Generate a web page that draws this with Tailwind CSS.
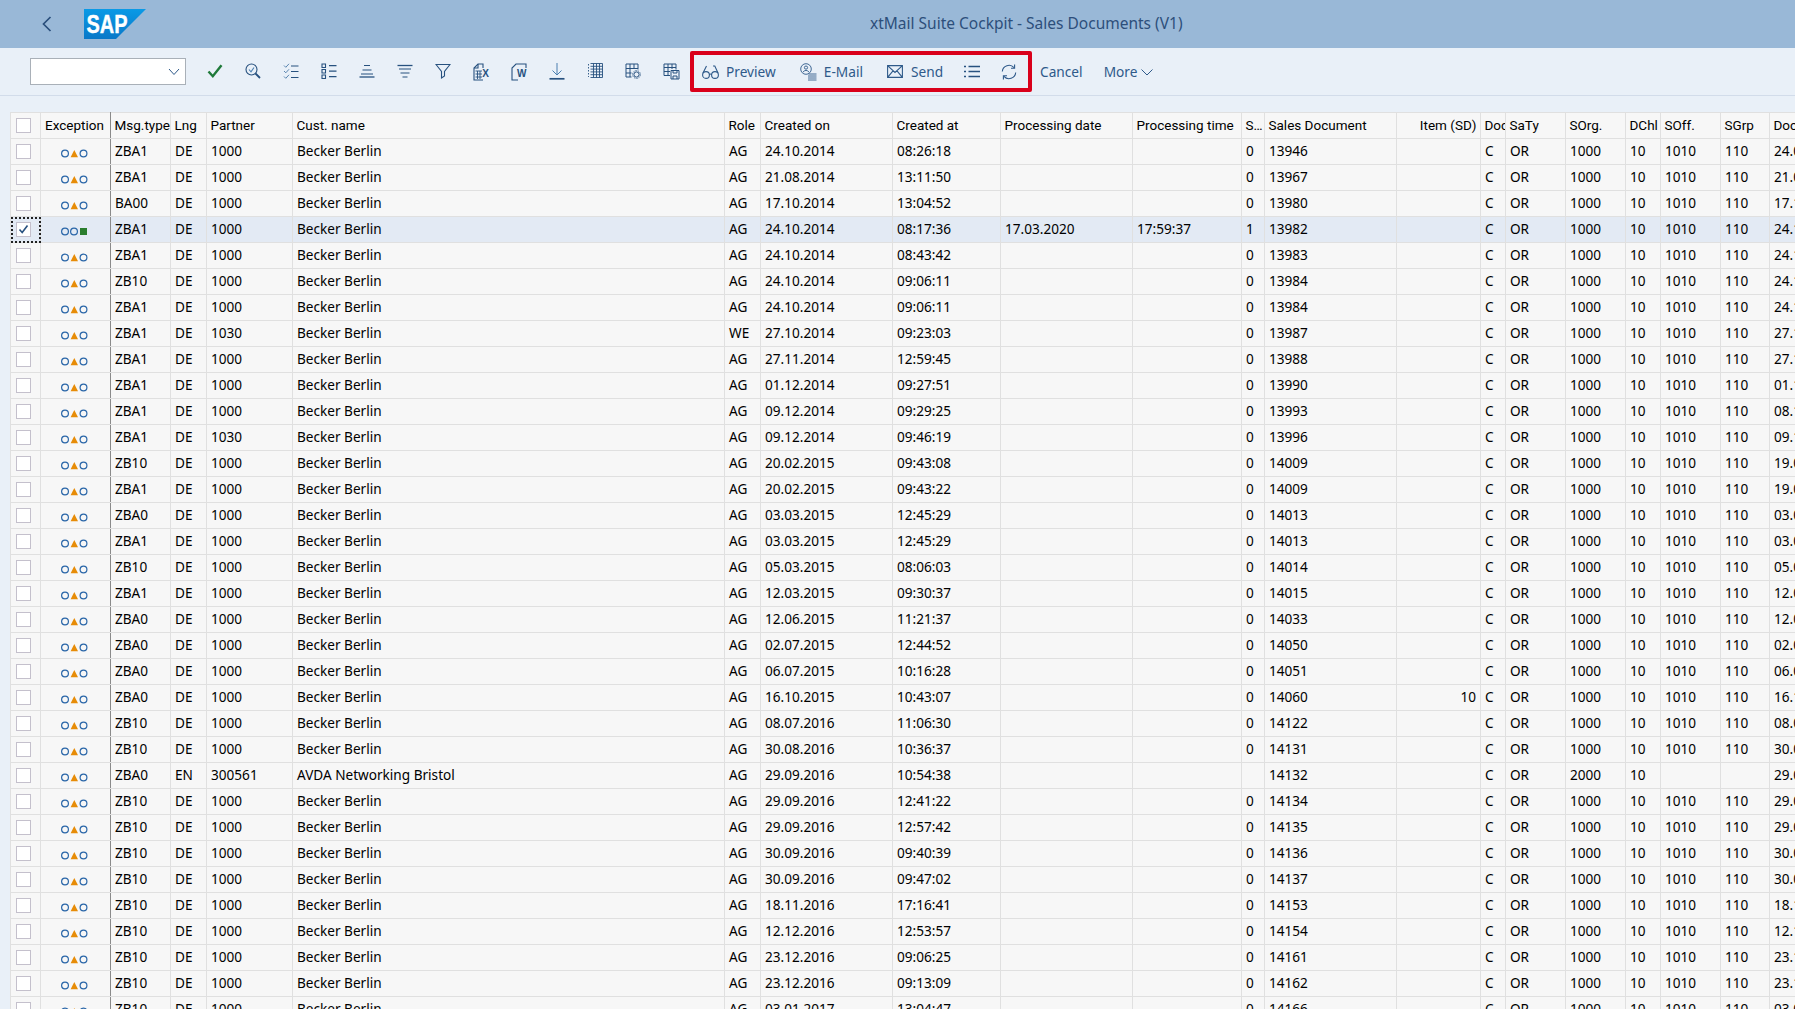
<!DOCTYPE html>
<html lang="en">
  <head>
    <meta charset="UTF-8" />
    <title>xtMail Suite Cockpit - Sales Documents (V1)</title>
    <script src="https://cdn.jsdelivr.net/npm/@tailwindcss/browser@4"></script>
  </head>
  <body class="h-screen overflow-hidden bg-[#e9f0f8] font-['Noto_Sans',sans-serif] text-[13.6px] text-black">
    <!-- shell header -->
    <header class="flex h-[48px] items-center bg-[#99b8d7]">
      <svg class="ml-[41px] h-[16px] w-[12px]" viewBox="0 0 12 16" fill="none" stroke="#2a4f7c" stroke-width="1.7"><path d="M9.5 1 L2.5 8 L9.5 15" /></svg>
      <svg class="ml-[31px] h-[30px] w-[62px]" viewBox="0 0 62 30">
        <defs>
          <linearGradient id="sapblue" x1="0" y1="0" x2="0" y2="1"><stop offset="0" stop-color="#0a9ae6" /><stop offset="1" stop-color="#0a78c8" /></linearGradient>
        </defs>
        <path d="M0 0 H62 L32 30 H0 Z" fill="url(#sapblue)" />
        <text x="2.5" y="24" font-family="Liberation Sans" font-weight="700" font-size="26" textLength="41" lengthAdjust="spacingAndGlyphs" fill="#fff" stroke="#fff" stroke-width=".4">SAP</text>
      </svg>
      <h1 class="ml-[724px] text-[15.5px] text-[#2d4f7b]">xtMail Suite Cockpit - Sales Documents (V1)</h1>
    </header>

    <!-- toolbar -->
    <div class="flex h-[48px] items-center border-b border-[#d2dcea] pl-[30px] text-[13.7px] text-[#2f5a8a]">
      <div class="flex h-[27px] w-[156px] items-center justify-end border border-[#a9b0b8] bg-white pr-[5px]">
        <svg class="h-[8px] w-[12px]" viewBox="0 0 12 8" fill="none" stroke="#2f5a8a" stroke-width="1"><path d="M1 1 L6 6.5 L11 1" /></svg>
      </div>
      <div class="ml-[10px] mt-[1px] flex text-[#27517f]">
        <span class="flex w-[38px] justify-center">
          <svg class="h-[16px] w-[16px]" viewBox="0 0 16 16" fill="none" stroke="#1f7a3a" stroke-width="2.4"><path d="M1.5 8.5 L5.8 13.2 L14.5 2.2" /></svg>
        </span>
        <span class="flex w-[38px] justify-center">
          <svg class="h-[16px] w-[16px]" viewBox="0 0 16 16" fill="none" stroke="currentColor" stroke-width="1.1"><circle cx="6.5" cy="6.5" r="5.5" /><path d="M4 6.5 L6 8.8 L9 4.5" stroke="#4a7fb0" /><path d="M10.5 10.5 L15 15" stroke-width="1.8" /></svg>
        </span>
        <span class="flex w-[38px] justify-center">
          <svg class="h-[16px] w-[16px]" viewBox="0 0 16 16" fill="none" stroke="currentColor" stroke-width="1"><path d="M1 2.5 L2.8 4.3 L6 .8 M1 8 L2.8 9.8 L6 6.3 M1 13.5 L2.8 15.3 L6 11.8" stroke="#5a85b0" /><path d="M8 3 H15.5 M8 8.5 H15.5 M8 14.5 H15.5" stroke-width="1.2" /></svg>
        </span>
        <span class="flex w-[38px] justify-center">
          <svg class="h-[16px] w-[16px]" viewBox="0 0 16 16" fill="none" stroke="currentColor" stroke-width="1.1"><path d="M1 1 H4.5 V4.5 H1 Z M1 6.5 H4.5 V10 H1 Z M1 12 H4.5 V15.5 H1 Z" /><path d="M8 2.7 H15.5 M8 8.2 H15.5 M8 13.7 H15.5" stroke-width="1.2" /></svg>
        </span>
        <span class="flex w-[38px] justify-center">
          <svg class="h-[16px] w-[16px]" viewBox="0 0 16 16" fill="none" stroke="currentColor" stroke-width="1.1"><path d="M5 2.5 H11 M3.5 7 H12.5 M2 11 H14" /><path d="M.5 14 H15.5" stroke-width="1.3" /></svg>
        </span>
        <span class="flex w-[38px] justify-center">
          <svg class="h-[16px] w-[16px]" viewBox="0 0 16 16" fill="none" stroke="currentColor" stroke-width="1.1"><path d="M.5 2.5 H15.5" stroke-width="1.3" /><path d="M2 6 H14 M3.5 10 H12.5 M5.5 14 H10.5" /></svg>
        </span>
        <span class="flex w-[38px] justify-center">
          <svg class="h-[16px] w-[16px]" viewBox="0 0 16 16" fill="none" stroke="currentColor" stroke-width="1.1"><path d="M1 1.5 H15 L9.5 8.5 V13 L6.5 15 V8.5 Z" /></svg>
        </span>
        <span class="flex w-[38px] justify-center">
          <svg class="h-[18px] w-[17px]" viewBox="0 0 17 18" fill="none" stroke="currentColor" stroke-width="1.1"><path d="M10 5 V1 H5 L1 5 V17 H10" /><path d="M5 1 V5 H1" /><path d="M2.5 8 H9 M2.5 11 H9 M2.5 14 H9 M4.5 8 V16 M7 8 V16" stroke-width=".9" /><text x="9.2" y="13.5" font-family="Liberation Sans" font-weight="700" font-size="10" fill="currentColor" stroke="none">X</text></svg>
        </span>
        <span class="flex w-[38px] justify-center">
          <svg class="h-[18px] w-[17px]" viewBox="0 0 17 18" fill="none" stroke="currentColor" stroke-width="1.1"><path d="M15 5 V1 H5 L1 5 V17 H7" /><text x="6" y="13.5" font-family="Liberation Sans" font-weight="700" font-size="10" fill="currentColor" stroke="none">W</text></svg>
        </span>
        <span class="flex w-[38px] justify-center">
          <svg class="h-[17px] w-[16px]" viewBox="0 0 16 17" fill="none" stroke="currentColor" stroke-width="1"><path d="M8 0 V11.5 M3.5 7.5 L8 12 L12.5 7.5" stroke="#4a7fb0" /><path d="M.5 15.8 H15.5" stroke-width="1.7" /></svg>
        </span>
        <span class="flex w-[38px] justify-center">
          <svg class="h-[15px] w-[15px]" viewBox="0 0 15 15" fill="none" stroke="currentColor" stroke-width=".9"><path d="M2.5 .5 H14.5 V14.5 H2.5" /><path d="M2.5 3.3 H14.5 M2.5 6.1 H14.5 M2.5 8.9 H14.5 M2.5 11.7 H14.5 M5.5 .5 V14.5 M8.5 .5 V14.5 M11.5 .5 V14.5" /><path d="M.5 1 V14" stroke-dasharray="1.5 1.5" /></svg>
        </span>
        <span class="flex w-[38px] justify-center">
          <svg class="h-[16px] w-[16px]" viewBox="0 0 16 16" fill="none" stroke="currentColor" stroke-width="1"><path d="M6.5 14 H1 V1 H13 V6.5 M1 5.5 H13 M1 10 H6.5 M5 1 V14 M9 1 V6" /><circle cx="11.5" cy="11.5" r="2.6" /><circle cx="11.5" cy="11.5" r="3.9" stroke-dasharray="1.2 1.2" /></svg>
        </span>
        <span class="flex w-[38px] justify-center">
          <svg class="h-[17px] w-[17px]" viewBox="0 0 17 17" fill="none" stroke="currentColor" stroke-width="1"><path d="M7 12.5 H1 V1 H13 V6.5 M1 4.5 H13 M1 8.5 H7 M5 1 V12.5 M9 1 V6" /><path d="M8 7.5 H16 V16 H8 Z M10 7.5 V10 H14 V7.5 M10 16 V13 H14 V16" /></svg>
        </span>
      </div>

      <!-- highlighted actions -->
      <div class="flex h-[41px] w-[342px] items-center rounded-[2px] border-4 border-[#d9001b]">
        <svg class="ml-[8px] h-[14px] w-[17px]" viewBox="0 0 17 14" fill="none" stroke="currentColor" stroke-width="1.1"><circle cx="4" cy="10" r="3.4" /><circle cx="13" cy="10" r="3.4" /><path d="M7.3 9.5 Q8.5 8.5 9.7 9.5 M1 8 L4.5 1 M16 8 L12.8 1 L11 1" /></svg>
        <span class="ml-[7px] pt-[2px]">Preview</span>
        <svg class="ml-[24px] h-[18px] w-[17px]" viewBox="0 0 17 18" fill="none" stroke="currentColor" stroke-width=".9"><circle cx="6" cy="6" r="5.3" /><circle cx="6" cy="4.6" r="1.6" /><path d="M3 9 Q6 5.8 9 9" /><path d="M8.5 11 H16.5 M8 13 H16.5 M8 15 H16.5 M8 17 H16.5" /></svg>
        <span class="ml-[7px] pt-[2px]">E-Mail</span>
        <svg class="ml-[24px] h-[13px] w-[16px]" viewBox="0 0 16 13" fill="none" stroke="currentColor" stroke-width="1.1"><path d="M.6 .6 H15.4 V12.4 H.6 Z M.6 .6 L8 7.5 L15.4 .6 M.6 12.4 L6 5.8 M15.4 12.4 L10 5.8" /></svg>
        <span class="ml-[8px] pt-[2px]">Send</span>
        <svg class="ml-[21px] h-[13px] w-[16px] text-[#27517f]" viewBox="0 0 16 13" fill="none" stroke="currentColor" stroke-width="1.7"><path d="M0 1.5 H2 M0 6.5 H2 M0 11.5 H2 M4.5 1.5 H16 M4.5 6.5 H16 M4.5 11.5 H16" /></svg>
        <svg class="ml-[21px] h-[16px] w-[16px]" viewBox="0 0 16 16" fill="none" stroke="currentColor" stroke-width="1.1"><path d="M1.3 7.5 A6.7 6.7 0 0 1 13 3.6 M14.7 8.5 A6.7 6.7 0 0 1 3 12.4" /><path d="M13.6 .5 V4.2 H10 M2.4 15.5 V11.8 H6" /></svg>
      </div>
      <span class="ml-[8px] pt-[2px]">Cancel</span>
      <span class="ml-[21px] pt-[2px]">More</span>
      <svg class="ml-[4px] mt-[1px] h-[7px] w-[12px]" viewBox="0 0 12 7" fill="none" stroke="currentColor" stroke-width="1"><path d="M.5 .5 L6 6 L11.5 .5" /></svg>
    </div>

    <!-- result list -->
    <div class="ml-[10px] mt-[16px] overflow-hidden">
      <table class="w-[1859px] table-fixed border-collapse bg-[#f7f7f7]">
        <colgroup>
          <col class="w-[30px]" /><col class="w-[70px]" /><col class="w-[60px]" /><col class="w-[36px]" /><col class="w-[86px]" />
          <col class="w-[432px]" /><col class="w-[36px]" /><col class="w-[132px]" /><col class="w-[108px]" /><col class="w-[132px]" />
          <col class="w-[109px]" /><col class="w-[23px]" /><col class="w-[132px]" /><col class="w-[84px]" /><col class="w-[25px]" />
          <col class="w-[60px]" /><col class="w-[60px]" /><col class="w-[35px]" /><col class="w-[60px]" /><col class="w-[49px]" /><col class="w-[100px]" />
        </colgroup>
        <thead>
          <tr class="h-[26px] border-t border-[#e0e0e0] text-left font-['Roboto',sans-serif] text-[13.5px]">
            <th class="border border-[#e0e0e0] p-0"><div class="ml-[4.5px] h-[15px] w-[15px] border border-[#c4c0cc] bg-white"></div></th>
            <th class="border border-[#e0e0e0] border-r-[#8a8a8a] px-[4px] font-normal whitespace-nowrap">Exception</th>
            <th class="overflow-hidden border border-[#e0e0e0] px-[3.5px] font-normal whitespace-nowrap">Msg.type</th>
            <th class="overflow-hidden border border-[#e0e0e0] px-[3.5px] font-normal">Lng</th>
            <th class="border border-[#e0e0e0] px-[3.5px] font-normal">Partner</th>
            <th class="border border-[#e0e0e0] px-[3.5px] font-normal">Cust. name</th>
            <th class="border border-[#e0e0e0] px-[3.5px] font-normal">Role</th>
            <th class="border border-[#e0e0e0] px-[3.5px] font-normal">Created on</th>
            <th class="border border-[#e0e0e0] px-[3.5px] font-normal">Created at</th>
            <th class="border border-[#e0e0e0] px-[3.5px] font-normal">Processing date</th>
            <th class="border border-[#e0e0e0] px-[3.5px] font-normal whitespace-nowrap">Processing time</th>
            <th class="overflow-hidden border border-[#e0e0e0] px-[3.5px] font-normal whitespace-nowrap">S…</th>
            <th class="border border-[#e0e0e0] px-[3.5px] font-normal">Sales Document</th>
            <th class="border border-[#e0e0e0] px-[3.5px] text-right font-normal">Item (SD)</th>
            <th class="overflow-hidden border border-[#e0e0e0] pl-[3.5px] font-normal whitespace-nowrap">Doc. cat</th>
            <th class="border border-[#e0e0e0] px-[3.5px] font-normal">SaTy</th>
            <th class="border border-[#e0e0e0] px-[3.5px] font-normal">SOrg.</th>
            <th class="overflow-hidden border border-[#e0e0e0] pl-[3.5px] font-normal whitespace-nowrap">DChl</th>
            <th class="border border-[#e0e0e0] px-[3.5px] font-normal">SOff.</th>
            <th class="border border-[#e0e0e0] px-[3.5px] font-normal">SGrp</th>
            <th class="border border-[#e0e0e0] px-[3.5px] font-normal">Doc. date</th>
          </tr>
        </thead>
        <tbody id="rows"></tbody>
      </table>
    </div>

    <script>
      // msg|lng|partner|name|role|created on|created at|proc date|proc time|status|doc|item|sorg|soff|sgrp|doc date
      const data = `ZBA1|DE|1000|Becker Berlin|AG|24.10.2014|08:26:18|||0|13946||1000|1010|110|24.09.2014
ZBA1|DE|1000|Becker Berlin|AG|21.08.2014|13:11:50|||0|13967||1000|1010|110|21.08.2014
BA00|DE|1000|Becker Berlin|AG|17.10.2014|13:04:52|||0|13980||1000|1010|110|17.10.2014
ZBA1|DE|1000|Becker Berlin|AG|24.10.2014|08:17:36|17.03.2020|17:59:37|1|13982||1000|1010|110|24.10.2014
ZBA1|DE|1000|Becker Berlin|AG|24.10.2014|08:43:42|||0|13983||1000|1010|110|24.10.2014
ZB10|DE|1000|Becker Berlin|AG|24.10.2014|09:06:11|||0|13984||1000|1010|110|24.10.2014
ZBA1|DE|1000|Becker Berlin|AG|24.10.2014|09:06:11|||0|13984||1000|1010|110|24.10.2014
ZBA1|DE|1030|Becker Berlin|WE|27.10.2014|09:23:03|||0|13987||1000|1010|110|27.10.2014
ZBA1|DE|1000|Becker Berlin|AG|27.11.2014|12:59:45|||0|13988||1000|1010|110|27.11.2014
ZBA1|DE|1000|Becker Berlin|AG|01.12.2014|09:27:51|||0|13990||1000|1010|110|01.12.2014
ZBA1|DE|1000|Becker Berlin|AG|09.12.2014|09:29:25|||0|13993||1000|1010|110|08.12.2014
ZBA1|DE|1030|Becker Berlin|AG|09.12.2014|09:46:19|||0|13996||1000|1010|110|09.12.2014
ZB10|DE|1000|Becker Berlin|AG|20.02.2015|09:43:08|||0|14009||1000|1010|110|19.02.2015
ZBA1|DE|1000|Becker Berlin|AG|20.02.2015|09:43:22|||0|14009||1000|1010|110|19.02.2015
ZBA0|DE|1000|Becker Berlin|AG|03.03.2015|12:45:29|||0|14013||1000|1010|110|03.03.2015
ZBA1|DE|1000|Becker Berlin|AG|03.03.2015|12:45:29|||0|14013||1000|1010|110|03.03.2015
ZB10|DE|1000|Becker Berlin|AG|05.03.2015|08:06:03|||0|14014||1000|1010|110|05.03.2015
ZBA1|DE|1000|Becker Berlin|AG|12.03.2015|09:30:37|||0|14015||1000|1010|110|12.03.2015
ZBA0|DE|1000|Becker Berlin|AG|12.06.2015|11:21:37|||0|14033||1000|1010|110|12.06.2015
ZBA0|DE|1000|Becker Berlin|AG|02.07.2015|12:44:52|||0|14050||1000|1010|110|02.07.2015
ZBA0|DE|1000|Becker Berlin|AG|06.07.2015|10:16:28|||0|14051||1000|1010|110|06.07.2015
ZBA0|DE|1000|Becker Berlin|AG|16.10.2015|10:43:07|||0|14060|10|1000|1010|110|16.10.2015
ZB10|DE|1000|Becker Berlin|AG|08.07.2016|11:06:30|||0|14122||1000|1010|110|08.07.2016
ZB10|DE|1000|Becker Berlin|AG|30.08.2016|10:36:37|||0|14131||1000|1010|110|30.08.2016
ZBA0|EN|300561|AVDA Networking Bristol|AG|29.09.2016|10:54:38||||14132||2000|||29.09.2016
ZB10|DE|1000|Becker Berlin|AG|29.09.2016|12:41:22|||0|14134||1000|1010|110|29.09.2016
ZB10|DE|1000|Becker Berlin|AG|29.09.2016|12:57:42|||0|14135||1000|1010|110|29.09.2016
ZB10|DE|1000|Becker Berlin|AG|30.09.2016|09:40:39|||0|14136||1000|1010|110|30.09.2016
ZB10|DE|1000|Becker Berlin|AG|30.09.2016|09:47:02|||0|14137||1000|1010|110|30.09.2016
ZB10|DE|1000|Becker Berlin|AG|18.11.2016|17:16:41|||0|14153||1000|1010|110|18.11.2016
ZB10|DE|1000|Becker Berlin|AG|12.12.2016|12:53:57|||0|14154||1000|1010|110|12.12.2016
ZB10|DE|1000|Becker Berlin|AG|23.12.2016|09:06:25|||0|14161||1000|1010|110|23.12.2016
ZB10|DE|1000|Becker Berlin|AG|23.12.2016|09:13:09|||0|14162||1000|1010|110|23.12.2016
ZB10|DE|1000|Becker Berlin|AG|03.01.2017|13:04:47|||0|14166||1000|1010|110|03.01.2017`

      const cell = (text) => `<td class="overflow-hidden border border-[#e0e0e0] px-[4px] whitespace-nowrap">${text}</td>`

      const lights = (done) => done
        ? `<svg class="ml-[19.5px] mt-[4px] h-[9px] w-[28px]" viewBox="0 0 28 9" fill="none" stroke="#2a66a8" stroke-width="1.2"><circle cx="4" cy="4.5" r="3.4" /><circle cx="13" cy="4.5" r="3.4" /><rect x="19" y="1" width="7" height="7" fill="#2a7d2e" stroke="none" /></svg>`
        : `<svg class="ml-[19.5px] mt-[4px] h-[9px] w-[28px]" viewBox="0 0 28 9" fill="none" stroke="#2a66a8" stroke-width="1.2"><circle cx="4" cy="4.5" r="3.4" /><path d="M9.6 8.2 L13.3 1 L17 8.2 Z" fill="#e78c07" stroke="none" /><circle cx="22.5" cy="4.5" r="3.4" /></svg>`

      const tick = `<svg class="h-[13px] w-[13px]" viewBox="0 0 13 13" fill="none" stroke="#27517f" stroke-width="1.6"><path d="M2.5 6.5 L5.2 9.5 L10.5 2.5" /></svg>`

      document.getElementById("rows").innerHTML = data.split("\n").map((line) => {
        const [msg, lng, partner, name, role, on, at, pdate, ptime, status, doc, item, sorg, soff, sgrp, ddate] = line.split("|")
        const picked = status === "1"
        return `<tr class="h-[26px] ${picked ? "bg-[#e3eaf4]" : ""}">
          <td class="border border-[#e0e0e0] p-0 ${picked ? "outline-2 outline-dotted outline-[#222] -outline-offset-2" : ""}"><div class="ml-[4.5px] flex h-[15px] w-[15px] items-center justify-center border border-[#c4c0cc] bg-white">${picked ? tick : ""}</div></td>
          <td class="border border-[#e0e0e0] border-r-[#8a8a8a] p-0">${lights(picked)}</td>
          ${[msg, lng, partner, name, role, on, at, pdate, ptime, status, doc].map(cell).join("")}
          <td class="border border-[#e0e0e0] px-[4px] text-right">${item}</td>
          ${["C", "OR", sorg, "10", soff, sgrp, ddate].map(cell).join("")}
        </tr>`
      }).join("")
    </script>
  </body>
</html>
